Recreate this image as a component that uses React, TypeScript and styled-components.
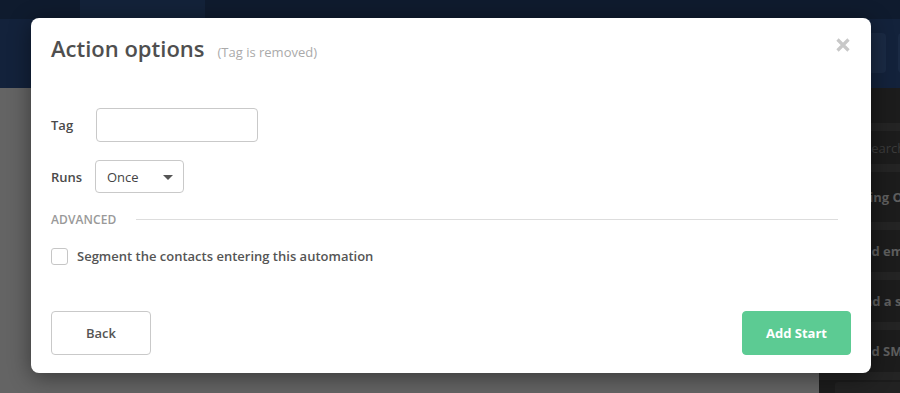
import React, { useState } from 'react';
import styled, { createGlobalStyle } from 'styled-components';

const GlobalStyle = createGlobalStyle`
  html, body {
    margin: 0;
    padding: 0;
    background: #646464;
  }
  body {
    font-family: 'Open Sans', 'Liberation Sans', sans-serif;
    -webkit-font-smoothing: antialiased;
  }
  * {
    box-sizing: border-box;
  }
`;

const Page = styled.div`
  position: relative;
  width: 900px;
  height: 393px;
  overflow: hidden;
  display: flex;
  flex-direction: column;
`;

const TopStrip = styled.div`
  height: 19px;
  background: #0f1b2e;
  display: flex;
  padding-left: 80px;
`;

const TopTab = styled.div`
  width: 125px;
  background: #132239;
`;

const Header = styled.div`
  height: 69px;
  background: #13223b;
  display: flex;
  justify-content: flex-end;
  align-items: flex-start;
  padding: 14px 0 0;
  gap: 12px;
`;

const HeaderButton = styled.div<{ $last?: boolean }>`
  width: ${(p) => (p.$last ? 40 : 60)}px;
  height: 40px;
  border-radius: 4px;
  background: #1a2a44;
  margin-right: ${(p) => (p.$last ? -38 : 0)}px;
`;

const Body = styled.div`
  flex: 1;
  display: flex;
`;

const Main = styled.div`
  flex: 1;
  background: #646464;
`;

const Sidebar = styled.div`
  width: 81px;
  background: #1c1c1c;
  padding-top: 35px;
  display: flex;
  flex-direction: column;
  overflow: hidden;
`;

const Band = styled.div`
  height: 8px;
  background: #242424;
`;

const SideItem = styled.div<{ $h: number; $pad: number; $muted?: boolean }>`
  height: ${(p) => p.$h}px;
  display: flex;
  align-items: center;
  padding-left: ${(p) => p.$pad}px;
  white-space: nowrap;
  overflow: hidden;
  font-size: 13px;
  font-weight: ${(p) => (p.$muted ? 400 : 700)};
  color: ${(p) => (p.$muted ? '#3b3b3b' : '#5e5e5e')};
`;

const SideBox = styled.div`
  margin: 2px 0 0 16px;
  flex: 1;
  background: #222;
  border-radius: 3px 0 0 0;
`;

const Modal = styled.div`
  position: absolute;
  left: 31px;
  top: 18px;
  width: 840px;
  height: 355px;
  background: #fff;
  border-radius: 8px;
  box-shadow: 0 4px 22px rgba(0, 0, 0, 0.45);
  padding: 15px 20px 18px;
  display: flex;
  flex-direction: column;
  color: #555;
`;

const ModalHeader = styled.div`
  display: flex;
  align-items: baseline;
  gap: 13px;
  position: relative;
`;

const Title = styled.h2`
  margin: 0;
  font-size: 22px;
  line-height: 30px;
  font-weight: 600;
  color: #4f4f4f;
`;

const Subtitle = styled.span`
  font-size: 13px;
  color: #aaa;
`;

const CloseButton = styled.button`
  position: absolute;
  right: 0;
  top: 4px;
  width: 16px;
  height: 16px;
  padding: 0;
  border: none;
  background: none;
  cursor: pointer;
  display: flex;
`;

const FieldRow = styled.div<{ $top: number }>`
  display: flex;
  align-items: center;
  margin-top: ${(p) => p.$top}px;
`;

const Label = styled.label`
  width: 45px;
  font-size: 13px;
  font-weight: 600;
  color: #4a4a4a;
`;

const TextInput = styled.input`
  width: 162px;
  height: 34px;
  border: 1px solid #c9c9c9;
  border-radius: 4px;
  padding: 0 10px;
  font-family: inherit;
  font-size: 13px;
  outline: none;
`;

const SelectBox = styled.div`
  width: 89px;
  height: 33px;
  margin-left: -1px;
  border: 1px solid #c9c9c9;
  border-radius: 4px;
  display: flex;
  align-items: center;
  justify-content: space-between;
  padding: 0 10px 0 11px;
  font-size: 13px;
  color: #444;
  cursor: pointer;
`;

const Caret = styled.span`
  width: 0;
  height: 0;
  border-left: 5px solid transparent;
  border-right: 5px solid transparent;
  border-top: 5px solid #555;
  margin-top: 1px;
`;

const SectionRow = styled.div`
  display: flex;
  align-items: center;
  gap: 20px;
  margin-top: 18px;
  height: 16px;
`;

const SectionTitle = styled.span`
  font-size: 12px;
  font-weight: 600;
  color: #999;
  letter-spacing: 0.1px;
`;

const Rule = styled.div`
  flex: 1;
  height: 1px;
  background: #ddd;
  margin-right: 13px;
`;

const CheckRow = styled.label`
  display: flex;
  align-items: center;
  gap: 9px;
  margin-top: 20px;
  font-size: 13px;
  font-weight: 600;
  color: #555;
  cursor: pointer;
`;

const CheckBox = styled.span<{ $checked: boolean }>`
  width: 17px;
  height: 17px;
  border: 1px solid #c6c6c6;
  border-radius: 3px;
  background: ${(p) => (p.$checked ? '#5ccb93' : '#fff')};
`;

const Footer = styled.div`
  margin-top: auto;
  display: flex;
  justify-content: space-between;
`;

const Button = styled.button<{ $primary?: boolean }>`
  height: 44px;
  width: ${(p) => (p.$primary ? 109 : 100)}px;
  border-radius: 4px;
  border: 1px solid ${(p) => (p.$primary ? '#5ccb93' : '#c9c9c9')};
  background: ${(p) => (p.$primary ? '#5ccb93' : '#fff')};
  color: ${(p) => (p.$primary ? '#fff' : '#555')};
  font-family: inherit;
  font-size: 13px;
  font-weight: ${(p) => (p.$primary ? 700 : 600)};
  cursor: pointer;
`;

const CloseIcon = () => (
  <svg width="16" height="16" viewBox="0 0 16 16">
    <path d="M2.5 2.5 L13.5 13.5 M13.5 2.5 L2.5 13.5" stroke="#c8c8c8" strokeWidth="3.2" strokeLinecap="butt" />
  </svg>
);

const App: React.FC = () => {
  const [tag, setTag] = useState('');
  const [segment, setSegment] = useState(false);

  return (
    <Page>
      <GlobalStyle />
      <TopStrip>
        <TopTab />
      </TopStrip>
      <Header>
        <HeaderButton />
        <HeaderButton $last />
      </Header>
      <Body>
        <Main />
        <Sidebar>
          <Band />
          <SideItem $h={33} $pad={45} $muted>
            Search
          </SideItem>
          <Band />
          <SideItem $h={50} $pad={26}>
            Timing Options
          </SideItem>
          <Band />
          <SideItem $h={42} $pad={29}>
            Send email
          </SideItem>
          <Band />
          <SideItem $h={42} $pad={30}>
            Load a site
          </SideItem>
          <Band />
          <SideItem $h={42} $pad={29}>
            Send SMS
          </SideItem>
          <Band />
          <SideBox />
        </Sidebar>
      </Body>

      <Modal>
        <ModalHeader>
          <Title>Action options</Title>
          <Subtitle>(Tag is removed)</Subtitle>
          <CloseButton aria-label="Close">
            <CloseIcon />
          </CloseButton>
        </ModalHeader>

        <FieldRow $top={45}>
          <Label>Tag</Label>
          <TextInput value={tag} onChange={(e) => setTag(e.target.value)} />
        </FieldRow>

        <FieldRow $top={18}>
          <Label>Runs</Label>
          <SelectBox>
            Once
            <Caret />
          </SelectBox>
        </FieldRow>

        <SectionRow>
          <SectionTitle>ADVANCED</SectionTitle>
          <Rule />
        </SectionRow>

        <CheckRow onClick={() => setSegment(!segment)}>
          <CheckBox $checked={segment} />
          Segment the contacts entering this automation
        </CheckRow>

        <Footer>
          <Button>Back</Button>
          <Button $primary>Add Start</Button>
        </Footer>
      </Modal>
    </Page>
  );
};

export default App;
